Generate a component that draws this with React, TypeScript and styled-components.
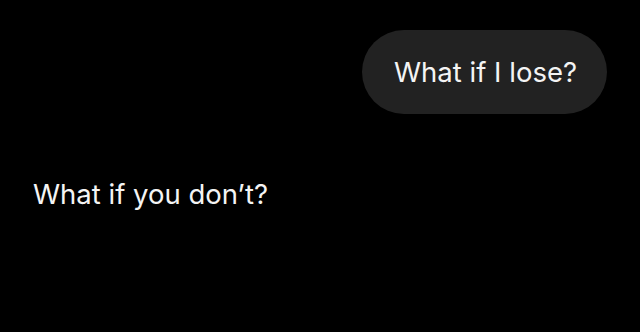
import React from "react";
import styled, { createGlobalStyle } from "styled-components";

const Global = createGlobalStyle`
  html, body { margin: 0; padding: 0; background: #000; }
  body { font-family: Inter, "Noto Sans", sans-serif; -webkit-font-smoothing: antialiased; }
`;

const Screen = styled.div`
  width: 640px;
  height: 332px;
  background: #000;
  display: flex;
  flex-direction: column;
  padding: 30px 33px 0 33px;
  box-sizing: border-box;
`;

const Row = styled.div<{ $out?: boolean }>`
  display: flex;
  justify-content: ${(p) => (p.$out ? "flex-end" : "flex-start")};
`;

const Bubble = styled.div`
  height: 84px;
  padding: 0 30px 0 32px;
  border-radius: 42px;
  background: #222222;
  color: #f4f4f4;
  font-size: 27.5px;
  line-height: 84px;
`;

const Plain = styled.div`
  margin-top: 64px;
  color: #f4f4f4;
  font-size: 27.5px;
  line-height: 32px;
`;

export default function App() {
  return (
    <>
      <Global />
      <Screen>
        <Row $out>
          <Bubble>What if I lose?</Bubble>
        </Row>
        <Row>
          <Plain>What if you don’t?</Plain>
        </Row>
      </Screen>
    </>
  );
}
